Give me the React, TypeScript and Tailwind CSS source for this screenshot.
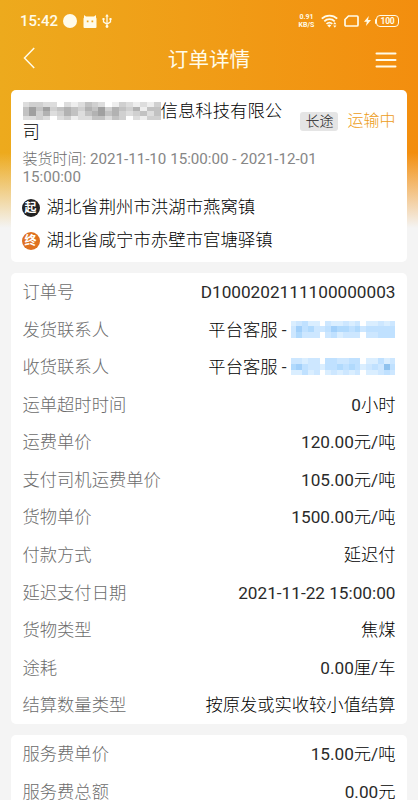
import clsx from "clsx";

type Info = { label: string; value: string; phone?: number[][] };

// shades of a masked phone number, one entry for each block
const phoneA = [
  [2, 3, 4, 2, 2, 0, 3, 2, 2, 3, 2, 3, 0, 2, 2, 3, 2, 3],
  [3, 6, 4, 5, 3, 3, 4, 6, 5, 5, 4, 5, 3, 4, 4, 4, 4, 4],
  [3, 5, 3, 3, 3, 0, 3, 4, 2, 3, 3, 3, 0, 3, 3, 4, 4, 4],
];
const phoneB = [
  [3, 3, 2, 3, 3, 0, 4, 4, 3, 3, 4, 4, 0, 2, 2, 4, 2, 3],
  [5, 6, 4, 3, 3, 2, 4, 4, 5, 4, 5, 4, 2, 3, 4, 3, 7, 4],
  [2, 2, 4, 2, 3, 0, 2, 3, 2, 3, 2, 3, 0, 2, 2, 3, 4, 3],
];
const company = [
  [2, 3, 3, 2, 2, 0, 2, 1, 2, 4, 3, 2, 0, 1, 3, 2, 1, 2, 1, 3],
  [4, 6, 4, 6, 3, 4, 5, 4, 3, 5, 4, 6, 3, 5, 4, 3, 5, 1, 4, 4],
  [4, 6, 3, 5, 2, 3, 5, 4, 2, 4, 5, 6, 4, 5, 3, 2, 3, 4, 2, 4],
  [2, 2, 3, 2, 0, 2, 3, 1, 2, 2, 4, 4, 2, 4, 3, 0, 2, 1, 3, 3],
];

const blues = ["#ffffff", "#eaf5ff", "#daeeff", "#cde7ff", "#c0e1ff", "#b1dafd", "#a2d0fa", "#8fc2ee"];
const grays = ["#ffffff", "#eeeeee", "#dddddd", "#d0d0d0", "#c2c2c2", "#b2b2b2", "#a0a0a0"];

const orderInfo: Info[] = [
  { label: "订单号", value: "D1000202111100000003" },
  { label: "发货联系人", value: "平台客服 -", phone: phoneA },
  { label: "收货联系人", value: "平台客服 -", phone: phoneB },
  { label: "运单超时时间", value: "0小时" },
  { label: "运费单价", value: "120.00元/吨" },
  { label: "支付司机运费单价", value: "105.00元/吨" },
  { label: "货物单价", value: "1500.00元/吨" },
  { label: "付款方式", value: "延迟付" },
  { label: "延迟支付日期", value: "2021-11-22 15:00:00" },
  { label: "货物类型", value: "焦煤" },
  { label: "途耗", value: "0.00厘/车" },
  { label: "结算数量类型", value: "按原发或实收较小值结算" },
];

const feeInfo: Info[] = [
  { label: "服务费单价", value: "15.00元/吨" },
  { label: "服务费总额", value: "0.00元" },
];

// latin runs are regular, chinese runs stay light
const Mixed = ({ text, latin }: { text: string; latin: string }) => (
  <span className="whitespace-pre">
    {text.split(/([\x20-\x7e]+)/).map((part, i) => (
      <span key={i} className={i % 2 ? latin : "font-light"}>
        {part}
      </span>
    ))}
  </span>
);

const Mosaic = ({ rows, colors, className }: { rows: number[][]; colors: string[]; className: string }) => (
  <span className={clsx("flex-col", className)}>
    {rows.map((row, i) => (
      <span key={i} className="flex flex-1">
        {row.map((shade, j) => (
          <span key={j} className="flex-1" style={{ backgroundColor: colors[shade] }} />
        ))}
      </span>
    ))}
  </span>
);

const InfoRow = ({ item }: { item: Info }) => (
  <div className="flex h-[37.55px] items-center justify-between text-[17.3px] leading-none whitespace-nowrap">
    <span className="text-[#6c6c6c]">{item.label}</span>
    <span className="flex items-center text-black">
      <Mixed text={item.value} latin="font-normal text-[17.2px] text-[#2a2a2a]" />
      {item.phone && <Mosaic rows={item.phone} colors={blues} className="-mt-0.5 ml-1 flex h-[17px] w-[105px]" />}
    </span>
  </div>
);

const StatusBar = () => (
  <div className="flex h-[42px] items-center justify-between pr-[19px] pl-5 text-[#fffbe9]">
    <div className="flex items-center">
      <span className="w-[37px] text-[15px] leading-none font-medium">15:42</span>
      <span className="ml-1.5 size-[14px] rounded-full bg-[#fffbe9]" />
      <svg className="ml-1.5" width="14" height="13" viewBox="0 0 14 13" fill="currentColor">
        <path fillRule="evenodd" d="M1 0l2 1.400h8L13 0v2.500l.5 1V12a1 1 0 0 1-1 1h-11a1 1 0 0 1-1-1V3.500l.5-1zM3.800 5.500v1.700h1.700V5.500zm4.700 0v1.700h1.700V5.500z" />
      </svg>
      <svg className="ml-[5px]" width="10" height="14" viewBox="0 0 10 14" fill="none" stroke="currentColor" strokeWidth="1.300">
        <path d="M5 2v10M1.500 5v2.800L5 10.300l3.500-2.500V5" />
        <path d="M5 0l1.800 2.600H3.200zM.5 4h2v2h-2zM7.500 4h2v2h-2z" fill="currentColor" stroke="none" />
        <circle cx="5" cy="12.500" r="1.400" fill="currentColor" stroke="none" />
      </svg>
    </div>
    <div className="flex items-center">
      <div className="flex w-[18px] flex-col items-center text-[7px] leading-[7px] font-bold">
        <span>0.91</span>
        <span className="mt-px">KB/S</span>
      </div>
      <svg className="ml-[5px]" width="17" height="14" viewBox="0 0 17 14" fill="none" stroke="currentColor" strokeWidth="1.800">
        <path d="M.8 4.700a11 11 0 0 1 15.400 0M3.300 7.300a7.400 7.400 0 0 1 10.400 0M5.500 9.900a4.300 4.300 0 0 1 5.800 0" />
        <path d="M6.300 11.200l2 2.300 2-2.300q-2-1.300-4 0zM12.200 10.300h3.200L13.800 8zM12.200 11.400h3.200l-1.600 2.300z" fill="currentColor" stroke="none" />
      </svg>
      <svg className="ml-1.5" width="15" height="12" viewBox="0 0 15 12" fill="none" stroke="currentColor" strokeWidth="1.700">
        <path d="M4.500 1H13a1 1 0 0 1 1 1v8a1 1 0 0 1-1 1H2a1 1 0 0 1-1-1V4.500z" />
      </svg>
      <svg className="ml-[5px]" width="7" height="10" viewBox="0 0 7 10" fill="currentColor">
        <path d="M4.800 0L0 5.800h2.800L2 10l5-6H4z" />
      </svg>
      <span className="ml-1 h-[5px] w-[1.500px] rounded-l bg-current" />
      <span className="flex h-3 w-[23px] items-center justify-center rounded-[4px] border border-current text-[8.500px] leading-none font-bold tracking-[-0.2px]">
        100
      </span>
    </div>
  </div>
);

const Address = ({ tag, color, text }: { tag: string; color: string; text: string }) => (
  <div className="flex h-[33px] items-center">
    <span className={clsx("-ml-px flex size-[18px] items-center justify-center rounded-full text-[12px] leading-none font-bold text-white", color)}>
      {tag}
    </span>
    <span className="ml-[7px] text-[17.400px] leading-none text-black">{text}</span>
  </div>
);

export default function App() {
  return (
    <div className="h-[800px] w-[418px] overflow-hidden bg-[#f4f4f4] font-['Roboto','Noto_Sans_CJK_SC',sans-serif] font-light">
      <div className="h-[228px] bg-linear-to-r from-[#edaa1d] to-[#f38e0e]">
        <div className="h-full bg-linear-to-b from-transparent from-[67%] to-[#f4f4f4]">
          <StatusBar />
          <header className="flex h-[35px] items-center justify-between pr-[21px] pl-[23px] text-[#fffbe9]">
            <svg className="mb-[4px]" width="20" height="22" viewBox="0 0 20 22" fill="none" stroke="currentColor" strokeWidth="1.500">
              <path d="M11.200 1L1.500 11l9.700 10" />
            </svg>
            <h1 className="pt-0.5 text-[20.600px] leading-none font-normal">订单详情</h1>
            <svg width="22" height="16" viewBox="0 0 22 16" fill="none" stroke="currentColor" strokeWidth="2" strokeLinecap="round">
              <path d="M1.500 1.500h19M1.500 8h19M1.500 14.500h19" />
            </svg>
          </header>
        </div>
      </div>

      <main className="-mt-[138px] flex flex-col gap-[11px] px-[11px]">
        <section className="h-[172px] rounded-[5px] bg-white px-[11.500px] pt-[11px]">
          <div className="flex items-center justify-between">
            <h2 className="h-[42px] w-[264px] text-[17.400px] leading-[21px] text-black">
              <Mosaic rows={company} colors={grays} className="mt-px inline-flex h-[18px] w-[138px] align-top" />
              信息科技有限公司
            </h2>
            <div className="mb-0.5 flex items-center gap-[9px]">
              <span className="rounded-[3px] bg-[#e5e5e5] px-[5px] py-[2px] text-[14px] leading-[15px] text-[#222]">长途</span>
              <span className="text-[16px] leading-none text-[#ed9c18]">运输中</span>
            </div>
          </div>
          <p className="mt-[8px] text-[15px] leading-[17.500px] text-[#6c6c6c]">
            <Mixed text={"装货时间: 2021-11-10 15:00:00 - 2021-12-01\n15:00:00"} latin="font-normal text-[15.15px] text-[#868686]" />
          </p>
          <div className="mt-[5px]">
            <Address tag="起" color="bg-[#222]" text="湖北省荆州市洪湖市燕窝镇" />
            <Address tag="终" color="bg-[#df711f]" text="湖北省咸宁市赤壁市官塘驿镇" />
          </div>
        </section>

        <section className="h-[451px] rounded-[5px] bg-white px-[11.500px] pt-px">
          {orderInfo.map((item) => (
            <InfoRow key={item.label} item={item} />
          ))}
        </section>

        <section className="rounded-[5px] bg-white px-[11.500px] pt-px">
          {feeInfo.map((item) => (
            <InfoRow key={item.label} item={item} />
          ))}
        </section>
      </main>
    </div>
  );
}
